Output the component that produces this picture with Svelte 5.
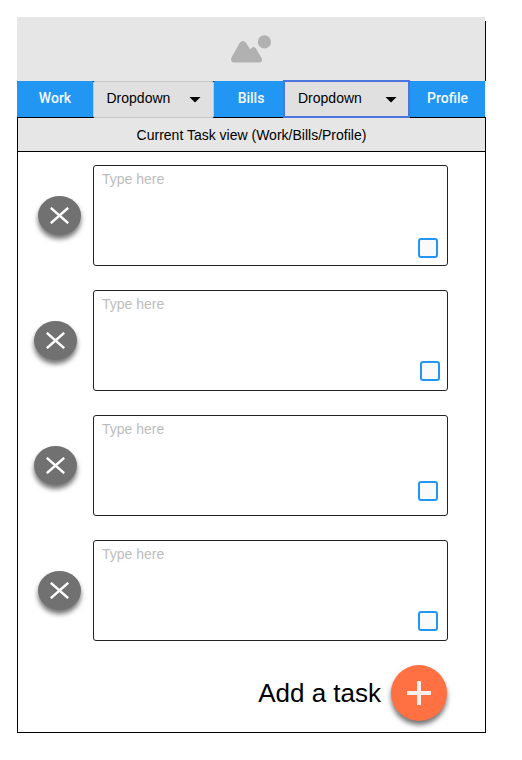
<script>
  const tasks = [
    { closeX: 20, checkX: 324, checkY: 72 },
    { closeX: 16, checkX: 326, checkY: 70 },
    { closeX: 16, checkX: 324, checkY: 65 },
    { closeX: 20, checkX: 324, checkY: 70 }
  ];
</script>

<div class="app">
  <header class="banner">
    <svg width="40" height="28" viewBox="0 0 40 28" fill="#b1b1b1">
      <circle cx="33.4" cy="6.9" r="6.6" />
      <path d="M.5 22.6 8.6 8Q11.8 3.8 15.2 8L18.9 14Q19.4 14.6 20 13.6Q22.5 10.6 25 13.6L30.8 23.6Q32 27.2 28.6 27.4H3Q-1 27 .5 22.6Z" />
    </svg>
  </header>
  <nav>
    <button class="tab work">Work</button>
    <button class="drop"><span>Dropdown</span><svg width="12" height="6" viewBox="0 0 12 6"><path d="M.5 0H11.5L6 5.6Z" /></svg></button>
    <button class="tab bills">Bills</button>
    <button class="drop focused"><span>Dropdown</span><svg width="12" height="6" viewBox="0 0 12 6"><path d="M.5 0H11.5L6 5.6Z" /></svg></button>
    <button class="tab profile">Profile</button>
  </nav>
  <main>
    <h1>Current Task view (Work/Bills/Profile)</h1>
    <div class="tasks">
      {#each tasks as task}
        <div class="row">
          <button class="close" aria-label="Remove task" style="margin-left: {task.closeX}px">
            <svg width="19" height="17" viewBox="0 0 19 17" fill="none" stroke="#fff" stroke-width="2.4"><path d="M.8 .8 18.2 16.2M18.2 .8 .8 16.2" /></svg>
          </button>
          <div class="card">
            <span>Type here</span>
            <i class="check" style="left: {task.checkX}px; top: {task.checkY}px"></i>
          </div>
        </div>
      {/each}
    </div>
    <footer>
      <span>Add a task</span>
      <button class="add" aria-label="Add a task">
        <svg width="24" height="24" viewBox="0 0 24 24" fill="#fbeeea"><path d="M10 0h4v10h10v4H14v10h-4V14H0v-4h10Z" /></svg>
      </button>
    </footer>
  </main>
</div>

<style>
  :global(body) { margin: 0; background: #fff; }
  .app { width: 469px; padding: 17px; font-family: "Liberation Sans", Arial, sans-serif; color: #000; }
  button { font: inherit; border: 0; padding: 0; margin: 0; box-sizing: border-box; color: inherit; }
  .banner {
    height: 64px; box-sizing: border-box; padding: 18px 0 0 214px; margin-right: 1px;
    background: #e6e6e6; position: relative;
  }
  .banner::after { content: ""; position: absolute; left: 100%; top: 4px; bottom: 0; width: 1px; background: #05051c; }
  .banner svg { display: block; }
  nav { display: flex; height: 36px; width: 468px; background: #17202a; }
  .tab {
    background: #2296f3; color: #f5faff; border-radius: 1px;
    font: 500 14px/34px Roboto, sans-serif; height: 36px; padding-bottom: 2px;
  }
  .work { width: 76px; }
  .bills { width: 70px; padding-left: 4px; }
  .profile { width: 75px; }
  .drop {
    display: flex; align-items: center; justify-content: space-between;
    width: 121px; height: 37px; background: #e0e0e0; border: 1px solid #c8c8c8; border-radius: 2px;
    padding: 0 12px 3px 12.5px; font-size: 14px; position: relative;
  }
  .drop svg { margin-top: 3px; }
  .focused {
    width: 127px; height: 38px; margin: -1px 0 -1px -1px; border: 2px solid #4c75df;
    border-radius: 0; padding: 0 11px 2px 13px;
  }
  main { border: 1px solid #000; height: 616px; box-sizing: border-box; }
  h1 {
    margin: 0; height: 33px; border-bottom: 1px solid #000; background: #e6e6e6;
    font-size: 14px; font-weight: 400; line-height: 34px; text-align: center;
  }
  .tasks { padding-top: 13px; display: flex; flex-direction: column; gap: 24px; }
  .row { display: flex; align-items: flex-start; justify-content: space-between; padding-right: 37px; height: 101px; }
  .close {
    width: 43px; height: 39px; margin-top: 31px; border-radius: 50%; background: #717171;
    display: flex; align-items: center; justify-content: center; box-shadow: 0 4px 5px rgba(0, 0, 0, .55);
  }
  .card {
    position: relative; width: 355px; height: 101px; box-sizing: border-box;
    border: 1px solid #212126; border-radius: 3px; padding: 5px 8px;
    font-size: 14px; line-height: 17px; color: #bdbdbd;
  }
  .check {
    position: absolute; width: 20px; height: 20px; box-sizing: border-box;
    border: 2px solid #2296f3; border-radius: 3px; background: #fafafa;
  }
  footer { display: flex; align-items: center; justify-content: flex-end; padding: 24px 38px 0 0; gap: 10px; font-size: 26px; }
  .add {
    width: 56px; height: 56px; border-radius: 50%; background: #ff7043;
    display: flex; align-items: center; justify-content: center; box-shadow: 0 4px 5px rgba(0, 0, 0, .55);
  }
</style>
